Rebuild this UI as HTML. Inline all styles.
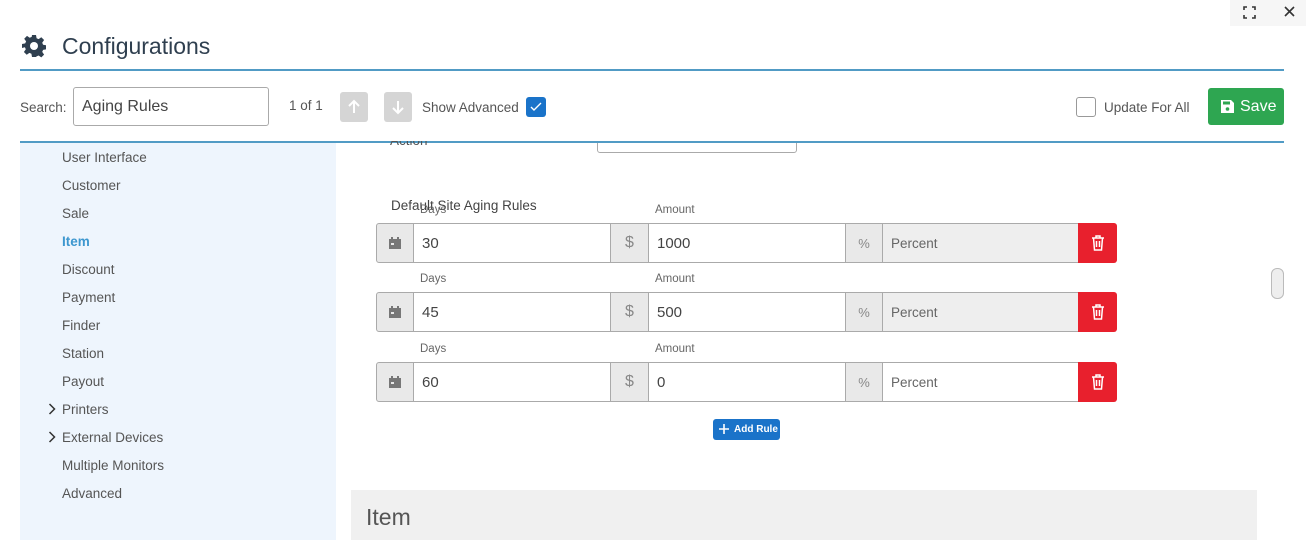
<!DOCTYPE html>
<html><head><style>
*{box-sizing:border-box;margin:0;padding:0}
body{width:1306px;height:540px;overflow:hidden;background:#fff;font-family:"Liberation Sans",sans-serif;color:#555;position:relative}
.a{position:absolute}
.side div{position:absolute;left:62px;font-size:13.5px;color:#555}
.lab{position:absolute;font-size:11.5px;color:#666}
.box{position:absolute;height:40px;border:1px solid #aaa;background:#fff}
.ad{background:#e9e9e9;color:#888;display:flex;align-items:center;justify-content:center}
.in{font-size:15px;color:#444;padding-left:8px;display:flex;align-items:center}
.del{position:absolute;width:39px;height:40px;background:#e8202d;border-radius:0 3px 3px 0;display:flex;align-items:center;justify-content:center}
</style></head><body>
<div class="a" style="left:1230px;top:0;width:76px;height:26px;background:#f6f6f6"></div>
<svg class="a" style="left:1243px;top:6px" width="13" height="13" viewBox="0 0 13 13" fill="none" stroke="#333" stroke-width="1.6"><path d="M1 4V1h3M9 1h3v3M12 9v3H9M4 12H1V9"/></svg>
<svg class="a" style="left:1284px;top:6px" width="11" height="11" viewBox="0 0 11 11" stroke="#333" stroke-width="1.6"><path d="M1 1l9 9M10 1l-9 9"/></svg>
<svg class="a" style="left:22px;top:34px" width="24" height="24" viewBox="0 0 24 24"><path fill="#2f3f4f" d="M10 1h4l.6 3.2 2 .9 2.7-1.9 2.8 2.8-1.9 2.7.9 2 3.2.6v4l-3.2.6-.9 2 1.9 2.7-2.8 2.8-2.7-1.9-2 .9L14 23h-4l-.6-3.2-2-.9-2.7 1.9-2.8-2.8 1.9-2.7-.9-2L0 14v-4l3.2-.6.9-2L2.2 4.7 5 1.9l2.7 1.9 2-.9z"/><circle cx="12" cy="12" r="4" fill="#fff"/></svg>
<div class="a" style="left:62px;top:33px;font-size:23px;color:#2f3f4f">Configurations</div>
<div class="a" style="left:20px;top:69px;width:1264px;height:2px;background:#519bc5"></div>
<div class="a" style="left:20px;top:100px;font-size:13.5px">Search:</div>
<div class="a" style="left:73px;top:87px;width:196px;height:39px;border:1px solid #aaa;border-radius:3px;font-size:16px;color:#444;padding:10px 0 0 8px">Aging Rules</div>
<div class="a" style="left:289px;top:98px;font-size:13.5px">1 of 1</div>
<svg class="a" style="left:340px;top:92px" width="28" height="30"><rect width="28" height="30" rx="3" fill="#d5d5d5"/><path d="M14 21V9M9 14l5-5 5 5" stroke="#fff" stroke-width="2" fill="none"/></svg>
<svg class="a" style="left:384px;top:92px" width="28" height="30"><rect width="28" height="30" rx="3" fill="#d5d5d5"/><path d="M14 9v12M9 16l5 5 5-5" stroke="#fff" stroke-width="2" fill="none"/></svg>
<div class="a" style="left:422px;top:100px;font-size:13.5px">Show Advanced</div>
<div class="a" style="left:526px;top:97px;width:20px;height:20px;background:#1a73c9;border-radius:3px"><svg width="20" height="20"><path d="M5 10l3 3 7-7" stroke="#fff" stroke-width="1.4" fill="none"/></svg></div>
<div class="a" style="left:1076px;top:97px;width:20px;height:20px;border:1px solid #999;border-radius:3px"></div>
<div class="a" style="left:1104px;top:100px;font-size:13.5px">Update For All</div>
<div class="a" style="left:1208px;top:88px;width:76px;height:37px;background:#2ea651;border-radius:3px;color:#fff;font-size:16px;padding:10px 0 0 12px;display:flex;gap:5px"><svg width="15" height="15" viewBox="0 0 15 15" style="margin-top:1px"><path fill="#fff" d="M1 1h10l3 3v10H1z"/><rect x="3" y="2.5" width="7" height="3" fill="#2ea651"/><circle cx="7.5" cy="10" r="1.8" fill="#2ea651"/></svg><span>Save</span></div>
<div class="a" style="left:20px;top:141px;width:1264px;height:2px;background:#519bc5"></div>
<div class="a" style="left:20px;top:143px;width:316px;height:397px;background:#eef5fd"></div>
<div class="side">
<div style="top:150px">User Interface</div><div style="top:178px">Customer</div><div style="top:206px">Sale</div>
<div style="top:234px;color:#3d97cf;font-weight:bold">Item</div><div style="top:262px">Discount</div><div style="top:290px">Payment</div>
<div style="top:318px">Finder</div><div style="top:346px">Station</div><div style="top:374px">Payout</div>
<div style="top:402px">Printers</div><div style="top:430px">External Devices</div><div style="top:458px">Multiple Monitors</div><div style="top:486px">Advanced</div>
</div>
<svg class="a" style="left:48px;top:403px" width="8" height="12"><path d="M1.5 1l5 5-5 5" stroke="#333" stroke-width="1.5" fill="none"/></svg>
<svg class="a" style="left:48px;top:431px" width="8" height="12"><path d="M1.5 1l5 5-5 5" stroke="#333" stroke-width="1.5" fill="none"/></svg>
<div class="a" style="left:390px;top:133px;font-size:13.5px;color:#555;clip-path:inset(8px 0 0 0)">Action</div>
<div class="a" style="left:597px;top:120px;width:200px;height:33px;border:1px solid #aaa;border-radius:3px;clip-path:inset(23px 0 0 0)"></div>
<div class="a" style="left:391px;top:198px;font-size:13.5px;color:#444">Default Site Aging Rules</div>
<div class="a" style="left:1271px;top:268px;width:13px;height:31px;border:1px solid #bbb;border-radius:6px;background:#eee"></div>

<div class="lab" style="left:420px;top:204px">Days</div><div class="lab" style="left:655px;top:204px">Amount</div>
<div class="lab" style="left:420px;top:273px">Days</div><div class="lab" style="left:655px;top:273px">Amount</div>
<div class="lab" style="left:420px;top:343px">Days</div><div class="lab" style="left:655px;top:343px">Amount</div>

<div class="box ad" style="left:376px;top:223px;width:38px;border-radius:3px 0 0 3px"><svg width="12" height="12"><rect x="0" y="2" width="12" height="10" fill="#777"/><rect x="2" y="0" width="2" height="3" fill="#777"/><rect x="8" y="0" width="2" height="3" fill="#777"/><rect x="2" y="6" width="3" height="2" fill="#e9e9e9"/></svg></div>
<div class="box in" style="left:413px;top:223px;width:198px">30</div>
<div class="box ad" style="left:610px;top:223px;width:39px;font-size:16px">$</div>
<div class="box in" style="left:648px;top:223px;width:198px">1000</div>
<div class="box ad" style="left:845px;top:223px;width:38px;font-size:13px">%</div>
<div class="box in" style="left:882px;top:223px;width:197px;background:#eee;font-size:13.5px;color:#666">Percent</div>
<div class="del" style="left:1078px;top:223px"><svg width="14" height="16" viewBox="0 0 14 16" fill="none" stroke="#fff" stroke-width="1.5"><path d="M1 3h12M5 3V1h4v2M2.5 3l1 12h7l1-12M5.5 6v6M8.5 6v6"/></svg></div>

<div class="box ad" style="left:376px;top:292px;width:38px;border-radius:3px 0 0 3px"><svg width="12" height="12"><rect x="0" y="2" width="12" height="10" fill="#777"/><rect x="2" y="0" width="2" height="3" fill="#777"/><rect x="8" y="0" width="2" height="3" fill="#777"/><rect x="2" y="6" width="3" height="2" fill="#e9e9e9"/></svg></div>
<div class="box in" style="left:413px;top:292px;width:198px">45</div>
<div class="box ad" style="left:610px;top:292px;width:39px;font-size:16px">$</div>
<div class="box in" style="left:648px;top:292px;width:198px">500</div>
<div class="box ad" style="left:845px;top:292px;width:38px;font-size:13px">%</div>
<div class="box in" style="left:882px;top:292px;width:197px;background:#eee;font-size:13.5px;color:#666">Percent</div>
<div class="del" style="left:1078px;top:292px"><svg width="14" height="16" viewBox="0 0 14 16" fill="none" stroke="#fff" stroke-width="1.5"><path d="M1 3h12M5 3V1h4v2M2.5 3l1 12h7l1-12M5.5 6v6M8.5 6v6"/></svg></div>

<div class="box ad" style="left:376px;top:362px;width:38px;border-radius:3px 0 0 3px"><svg width="12" height="12"><rect x="0" y="2" width="12" height="10" fill="#777"/><rect x="2" y="0" width="2" height="3" fill="#777"/><rect x="8" y="0" width="2" height="3" fill="#777"/><rect x="2" y="6" width="3" height="2" fill="#e9e9e9"/></svg></div>
<div class="box in" style="left:413px;top:362px;width:198px">60</div>
<div class="box ad" style="left:610px;top:362px;width:39px;font-size:16px">$</div>
<div class="box in" style="left:648px;top:362px;width:198px">0</div>
<div class="box ad" style="left:845px;top:362px;width:38px;font-size:13px">%</div>
<div class="box in" style="left:882px;top:362px;width:197px;font-size:13.5px;color:#666">Percent</div>
<div class="del" style="left:1078px;top:362px"><svg width="14" height="16" viewBox="0 0 14 16" fill="none" stroke="#fff" stroke-width="1.5"><path d="M1 3h12M5 3V1h4v2M2.5 3l1 12h7l1-12M5.5 6v6M8.5 6v6"/></svg></div>

<div class="a" style="left:713px;top:419px;width:67px;height:21px;background:#1a73c9;border-radius:3px;color:#fff;font-size:10px;font-weight:bold;padding:5px 0 0 21px">Add Rule</div>
<svg class="a" style="left:719px;top:424px" width="10" height="10"><path d="M5 0v10M0 5h10" stroke="#fff" stroke-width="1.6"/></svg>
<div class="a" style="left:351px;top:490px;width:906px;height:50px;background:#f0f0f0"></div>
<div class="a" style="left:366px;top:504px;font-size:23px;color:#555">Item</div>
</body></html>
